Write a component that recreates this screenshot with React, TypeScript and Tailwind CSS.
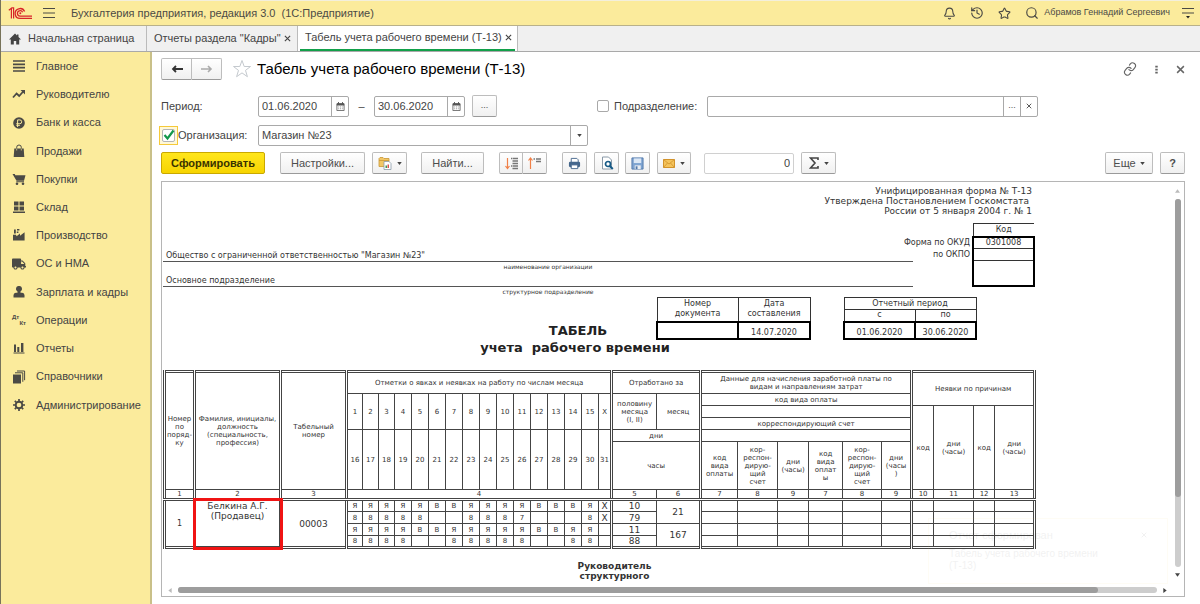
import React from 'react';
import { Bell, History, Link, Search, Star } from 'lucide-react';
import { FaTruck } from 'react-icons/fa';

const icon = 'h-[14px] w-[14px] text-[#4b4a45]';

const sections = [
  {
    title: 'Главное',
    icon: (
      <svg viewBox="0 0 14 14" className={icon}>
        <path d="M1 2h12M1 5.3h12M1 8.6h12M1 12h12" stroke="currentColor" strokeWidth="1.7" />
      </svg>
    ),
  },
  {
    title: 'Руководителю',
    icon: (
      <svg viewBox="0 0 14 14" className={icon}>
        <path d="M1 10.5l3.600-4 2.600 2.500 4-4.500" fill="none" stroke="currentColor" strokeWidth="1.8" />
        <path d="M8.500 3H13v4.500z" fill="currentColor" />
      </svg>
    ),
  },
  {
    title: 'Банк и касса',
    icon: (
      <svg viewBox="0 0 14 14" className={icon}>
        <circle cx="7" cy="7" r="5.8" fill="currentColor" />
        <path d="M5.6 11V3.9h2.2a1.8 1.8 0 0 1 0 3.8H4.3M4.3 9.3h3.6" fill="none" stroke="#fbeb9c" strokeWidth="1" />
      </svg>
    ),
  },
  {
    title: 'Продажи',
    icon: (
      <svg viewBox="0 0 14 14" className={icon}>
        <path d="M2.300 4.500h9.400l.6 8.500H1.700z" fill="currentColor" />
        <path d="M4.700 6.500V3.300a2.300 2.300 0 0 1 4.600 0v3.200" fill="none" stroke="currentColor" strokeWidth="1" />
        <path d="M4.700 4.500v2M9.300 4.500v2" stroke="#fbeb9c" strokeWidth=".7" />
      </svg>
    ),
  },
  {
    title: 'Покупки',
    icon: (
      <svg viewBox="0 0 14 14" className={icon}>
        <path d="M.5 2h2.300l.5 1.200H13.500L12 8.800H4.500zM4.300 9.300h7.700v1H4.300z" fill="currentColor" />
        <circle cx="5" cy="11.700" r="1.300" fill="currentColor" />
        <circle cx="11" cy="11.700" r="1.300" fill="currentColor" />
      </svg>
    ),
  },
  {
    title: 'Склад',
    icon: (
      <svg viewBox="0 0 14 14" className={icon}>
        <path d="M2 1.5h4.5v4H2zM7.5 1.5H12v4H7.5zM2 6.5h4.5v4H2zM7.5 6.5H12v4H7.5zM1 11.5h12V13H1z" fill="currentColor" />
      </svg>
    ),
  },
  {
    title: 'Производство',
    icon: (
      <svg viewBox="0 0 14 14" className={icon}>
        <path d="M1 12.5V6.8h3l.6 1.4L8 5.5v2.2l4.6-3.4v8.2zM2 1.5h1.8v4H2zM5 1h2.4v1.6H5zM4.8 3.4h1.6v1.5H4.8z" fill="currentColor" />
      </svg>
    ),
  },
  { title: 'ОС и НМА', icon: <FaTruck className={icon} /> },
  {
    title: 'Зарплата и кадры',
    icon: (
      <svg viewBox="0 0 14 14" className={icon}>
        <path d="M7 1a2.700 2.900 0 0 1 1.500 5.500v1.200h1.700q2.300.4 2.300 2.600v2.200h-11v-2.200q0-2.200 2.300-2.600h1.700V6.500A2.700 2.900 0 0 1 7 1z" fill="currentColor" />
      </svg>
    ),
  },
  {
    title: 'Операции',
    icon: (
      <span className="flex w-[14px] flex-col text-[6px] leading-[6px] font-bold text-[#4b4a45]">
        <span>Дт</span>
        <span className="self-end">Кт</span>
      </span>
    ),
  },
  {
    title: 'Отчеты',
    icon: (
      <svg viewBox="0 0 14 14" className={icon}>
        <path d="M2 3.5h2V11H2zM5.3 6h2v5h-2zM9 2h2.4v9H9zM1.5 11.5h11v1h-11z" fill="currentColor" />
      </svg>
    ),
  },
  {
    title: 'Справочники',
    icon: (
      <svg viewBox="0 0 14 14" className={icon}>
        <path d="M1 4.5h8v9H1z" fill="currentColor" />
        <path d="M3 2.8h7.8v9M5 1h7.6v9.2" fill="none" stroke="currentColor" strokeWidth="1" />
      </svg>
    ),
  },
  {
    title: 'Администрирование',
    icon: (
      <svg viewBox="0 0 14 14" className={icon}>
        <circle cx="7" cy="7" r="3.300" fill="none" stroke="currentColor" strokeWidth="1.900" />
        <path d="M7 1v2.200M7 10.800V13M1 7h2.200M10.800 7H13M2.800 2.800l1.500 1.500M9.700 9.700l1.500 1.500M2.800 11.200l1.500-1.500M9.700 4.300l1.500-1.500" stroke="currentColor" strokeWidth="1.700" />
      </svg>
    ),
  },
];

const firstHalf = ['1', '2', '3', '4', '5', '6', '7', '8', '9', '10', '11', '12', '13', '14', '15', 'X'];
const secondHalf = ['16', '17', '18', '19', '20', '21', '22', '23', '24', '25', '26', '27', '28', '29', '30', '31'];

const marks = [
  ['Я', 'Я', 'Я', 'Я', 'Я', 'В', 'В', 'Я', 'Я', 'Я', 'Я', 'В', 'В', 'В', 'Я', 'X'],
  ['8', '8', '8', '8', '8', '', '', '8', '8', '8', '7', '', '', '', '8', 'X'],
  ['Я', 'Я', 'Я', 'Я', 'В', 'В', 'Я', 'Я', 'Я', 'Я', 'Я', 'В', 'В', 'Я', 'Я', ''],
  ['8', '8', '8', '8', '', '', '8', '8', '8', '8', '8', '', '', '8', '8', ''],
];
const halfTotals = ['10', '79', '11', '88'];
const monthTotals = ['21', '', '167', ''];

const columnNumbers = ['5', '6', '7', '8', '9', '7', '8', '9', '10', '11', '12', '13'];

const button =
  'flex h-[22px] items-center justify-center rounded-[2px] border border-[#bdbdbd] border-b-[#9a9a9a] bg-linear-to-b from-white to-[#f0f0f0] text-[11px] text-[#4d4d4d]';
const field = 'flex h-[21px] items-stretch rounded-[2px] border border-[#a9a9a9] bg-white';
const input = 'min-w-0 flex-1 bg-transparent px-[3px] text-[11px] text-[#444] outline-none';
const part = 'flex shrink-0 items-center justify-center border-l border-[#a9a9a9] text-[#555]';
const group = 'border-x-3 border-double border-[#444]';

const Caret = () => (
  <svg viewBox="0 0 6 4" className="h-[3px] w-[5px]">
    <path d="M0 0h6L3 4z" fill="#444" />
  </svg>
);

const Cross = ({ className }: { className: string }) => (
  <svg viewBox="0 0 8 8" className={className}>
    <path d="M1 1l6 6M7 1L1 7" stroke="currentColor" strokeWidth="1.3" />
  </svg>
);

const CalendarIcon = () => (
  <svg viewBox="0 0 10 10" className="h-[9px] w-[9px]">
    <path d="M1 2h8v7.5H1z" fill="#fff" stroke="#666" />
    <path d="M1 1.5h8v2.5H1zM2.3 0h1v2h-1zM6.7 0h1v2h-1z" fill="#555" />
    <path d="M2.5 5.5h5M2.5 7.5h5" stroke="#888" strokeDasharray="1 1" />
  </svg>
);

const DateField = ({ label, value }: { label: string; value: string }) => (
  <div className={`${field} w-[91px]`}>
    <input className={input} aria-label={label} defaultValue={value} />
    <button className={`${part} w-[17px]`} aria-label="Календарь">
      <CalendarIcon />
    </button>
  </div>
);

const TopBar = () => (
  <header className="flex h-[26px] items-center border-t border-b border-t-[#f3efdc] border-b-[#b9b18a] bg-[#fbeb9c] pl-[7px] pr-[6px] text-[#4b4a45]">
    <svg viewBox="0 0 24 13" className="h-[13px] w-[24px]" fill="none" stroke="#d8232a">
      <path d="M.8 3.2L3.4 1.3v10.2M5.6 11.5V.8h-2" strokeWidth="1.2" />
      <path d="M16.6 4.6A4.9 4.9 0 1 0 12.3 11.4H24" strokeWidth="1.3" />
      <path d="M14.6 5.3A2.7 2.7 0 1 0 12.3 9.1H24" strokeWidth="1.3" />
      <circle cx="12.3" cy="6.3" r="1" fill="#d8232a" stroke="none" />
    </svg>
    <button className="ml-[11px]" aria-label="Меню">
      <svg viewBox="0 0 12 12" className="h-3 w-3">
        <path d="M0 1.5h12M0 6h12M0 10.5h12" stroke="#4b4a45" />
      </svg>
    </button>
    <span className="ml-4 text-[11px] whitespace-pre">Бухгалтерия предприятия, редакция 3.0  (1С:Предприятие)</span>
    <div className="ml-auto flex items-center gap-[14px]">
      <button aria-label="Уведомления"><Bell className="h-[13px] w-[13px]" strokeWidth={2} /></button>
      <button aria-label="История"><History className="h-[14px] w-[14px]" strokeWidth={2} /></button>
      <button aria-label="Избранное"><Star className="h-[13px] w-[13px]" strokeWidth={2} /></button>
      <button aria-label="Поиск"><Search className="h-[14px] w-[14px]" strokeWidth={2} /></button>
    </div>
    <span className="ml-[5px] text-[9px]">Абрамов Геннадий Сергеевич</span>
    <button className="ml-3" aria-label="Сервис">
      <svg viewBox="0 0 12 12" className="h-3 w-3">
        <path d="M0 1.5h12M0 6h12" stroke="#4b4a45" strokeWidth="1.2" />
        <path d="M4 9h4l-2 2.5z" fill="#222" />
      </svg>
    </button>
  </header>
);

const Tabs = () => (
  <nav className="flex h-[26px] items-stretch border-b border-[#a9a9a9] bg-[#f0f0f0] text-[11px] text-[#444]">
    <a href="#home" className="flex w-[146px] items-center gap-[7px] border-r border-[#bbb] pl-2 whitespace-nowrap">
      <svg viewBox="0 0 12 12" className="h-3 w-3">
        <path d="M6 .5L0 6.5h1.8v5h3v-3.5h2.4v3.5h3v-5H12L9.5 4V1.5H8v1z" fill="#444" />
      </svg>
      Начальная страница
    </a>
    <a href="#reports" className="flex w-[151px] items-center justify-between border-r border-[#bbb] pr-[6px] pl-[7px] whitespace-nowrap">
      Отчеты раздела "Кадры"
      <Cross className="h-[7px] w-[7px]" />
    </a>
    <a href="#t13" className="flex w-[220px] flex-col border-r border-[#bbb] bg-white px-[2px] whitespace-nowrap">
      <span className="flex flex-1 items-center justify-between border-b-2 border-[#12a04a] pr-[3px] pl-[5px]">
        Табель учета рабочего времени (Т-13)
        <Cross className="h-[7px] w-[7px]" />
      </span>
    </a>
  </nav>
);

const Sidebar = () => (
  <aside className="w-[151px] shrink-0 border-r-2 border-[#c9c089] bg-[#fbeb9c]">
    <ul className="grid h-[367px] auto-rows-fr text-[11px] text-[#444]">
      {sections.map((section) => (
        <li key={section.title} className="flex items-center">
          <a href="#section" className="flex items-center gap-[10px] pl-[11px] whitespace-nowrap">
            {section.icon}
            {section.title}
          </a>
        </li>
      ))}
    </ul>
  </aside>
);

const Heading = () => (
  <div className="flex h-[22px] items-center">
    <div className="flex">
      <button className={`${button} w-[31px] rounded-r-none`} aria-label="Назад">
        <svg viewBox="0 0 12 8" className="h-2 w-3">
          <path d="M12 4H2M5 1L2 4l3 3" fill="none" stroke="#333" strokeWidth="1.8" />
        </svg>
      </button>
      <button className={`${button} w-[30px] rounded-l-none border-l-0`} aria-label="Вперед">
        <svg viewBox="0 0 12 8" className="h-2 w-3">
          <path d="M0 4h10M7 1l3 3-3 3" fill="none" stroke="#aaa" strokeWidth="1.6" />
        </svg>
      </button>
    </div>
    <button className="ml-[10px]" aria-label="В избранное">
      <svg viewBox="0 0 20 20" className="h-5 w-5">
        <path d="M10 1.5l2.2 6h6.3l-5 3.9 1.9 6.3-5.4-3.8-5.4 3.8 1.9-6.3-5-3.9h6.3z" fill="#fff" stroke="#c4c9ce" />
      </svg>
    </button>
    <h1 className="ml-[5px] text-[15px] text-black">Табель учета рабочего времени (Т-13)</h1>
    <div className="ml-auto flex items-center gap-[15px] text-[#666]">
      <button aria-label="Ссылка"><Link className="h-[14px] w-[14px] -rotate-6" strokeWidth={2} /></button>
      <button className="px-[3px]" aria-label="Еще">
        <svg viewBox="0 0 3 11" className="h-[9px] w-[3px]">
          <path d="M0 1h3v2H0zM0 4.7h3v2H0zM0 8.4h3v2H0z" fill="currentColor" />
        </svg>
      </button>
      <button aria-label="Закрыть"><Cross className="h-[9px] w-[9px]" /></button>
    </div>
  </div>
);

const Filters = () => (
  <div className="mt-[15px] flex flex-col gap-2 text-[11px] text-[#444]">
    <div className="flex items-center">
      <span className="w-[97px]">Период:</span>
      <DateField label="Начало периода" value="01.06.2020" />
      <span className="w-[25px] text-center">–</span>
      <DateField label="Конец периода" value="30.06.2020" />
      <button className={`${button} ml-[7px] w-[25px]`} aria-label="Выбрать период">
        <span className="text-[9px]">...</span>
      </button>
      <input id="department" type="checkbox" className="ml-[100px] h-3 w-3 appearance-none rounded-[2px] border border-[#a9a9a9] bg-white" />
      <label htmlFor="department" className="ml-[5px] w-[93px]">Подразделение:</label>
      <div className={`${field} w-[331px]`}>
        <input className={input} aria-label="Подразделение" />
        <button className={`${part} w-[17px] text-[9px]`} aria-label="Выбрать">...</button>
        <button className={`${part} w-[17px]`} aria-label="Очистить">
          <Cross className="h-[6px] w-[6px]" />
        </button>
      </div>
    </div>
    <div className="flex items-center">
      <span className="relative -ml-[2px] flex border border-[#f5c93a] bg-[#fff8d8] p-[2px]">
        <input id="organization" type="checkbox" defaultChecked className="h-[13px] w-[13px] appearance-none rounded-[2px] border border-[#b5b5b5] bg-white" />
        <svg viewBox="0 0 12 12" className="pointer-events-none absolute top-[2px] left-[3px] h-3 w-3">
          <path d="M1.5 6l3 3.5L10.500 1.500" fill="none" stroke="#12984a" strokeWidth="2.2" />
        </svg>
      </span>
      <label htmlFor="organization" className="w-[80px]">Организация:</label>
      <div className={`${field} w-[330px]`}>
        <input className={input} aria-label="Организация" defaultValue="Магазин №23" />
        <button className={`${part} w-[17px]`} aria-label="Открыть список"><Caret /></button>
      </div>
    </div>
  </div>
);

const Toolbar = () => (
  <div className="mt-[6px] flex items-center">
    <button className="h-[22px] w-[104px] rounded-[2px] border border-[#c9a800] bg-linear-to-b from-[#ffe61a] to-[#f7d400] text-[11px] font-bold text-[#3a3300]">
      Сформировать
    </button>
    <button className={`${button} ml-[15px] w-[85px]`}>Настройки...</button>
    <button className={`${button} ml-[7px] w-[35px] gap-[5px]`} aria-label="Варианты отчета">
      <svg viewBox="0 0 14 14" className="h-[14px] w-[14px]">
        <path d="M1 2.500l1-1h3l1 1h5v8H1z" fill="#f2c766" stroke="#c99735" strokeWidth=".8" />
        <path d="M1 4.500h10" stroke="#c99735" strokeWidth=".8" />
        <path d="M6 5.500h5l2 2v6H6z" fill="#fff" stroke="#8a9aa8" strokeWidth=".8" />
        <path d="M7.500 12V9.500h1.500V12z" fill="#3c9a57" />
        <path d="M9.500 12V8.500H11V12z" fill="#d9534f" />
      </svg>
      <Caret />
    </button>
    <button className={`${button} ml-[14px] w-[63px]`}>Найти...</button>
    <div className="ml-[15px] flex">
      <button className={`${button} w-6 rounded-r-none`} aria-label="Развернуть группы">
        <svg viewBox="0 0 13 13" className="h-[13px] w-[13px]">
          <path d="M2.500 1v10M.5 9l2 2.500 2-2.500" fill="none" stroke="#f08048" strokeWidth="1.2" />
          <path d="M6 1.500h1.500M8 1.500h5M7.500 4h5.500M7.500 6.500h5.500M6 9h1.500M8 9h5M7.500 11.500h5.500" stroke="#777" strokeWidth="1.4" />
        </svg>
      </button>
      <button className={`${button} w-6 rounded-l-none border-l-0`} aria-label="Свернуть группы">
        <svg viewBox="0 0 13 13" className="h-[13px] w-[13px]">
          <path d="M2.500 12V1.500M.5 3.500l2-2.500 2 2.500" fill="none" stroke="#f08048" strokeWidth="1.2" />
          <path d="M5.500 2h1.500M8 2h5M8 4.500h5" stroke="#777" strokeWidth="1.6" />
        </svg>
      </button>
    </div>
    <button className={`${button} ml-[15px] w-[25px]`} aria-label="Печать">
      <svg viewBox="0 0 14 14" className="h-[13px] w-[13px]">
        <path d="M3.500 1.500h6l1.500 1.500v3h-7.500z" fill="#fff" stroke="#45678c" />
        <rect x="1" y="5" width="12" height="6" rx="1.500" fill="#45678c" />
        <path d="M3.500 8.500h7v4h-7z" fill="#fff" stroke="#45678c" />
      </svg>
    </button>
    <button className={`${button} ml-[7px] w-[25px]`} aria-label="Предварительный просмотр">
      <svg viewBox="0 0 14 14" className="h-[14px] w-[14px]">
        <path d="M2.500 1h6l3 3v9h-9z" fill="#fff" stroke="#8a9aa8" />
        <circle cx="8" cy="8" r="2.500" fill="#fff" stroke="#155a86" strokeWidth="1.700" />
        <path d="M9.800 10l3 3" stroke="#155a86" strokeWidth="2" />
      </svg>
    </button>
    <button className={`${button} ml-[6px] w-[25px]`} aria-label="Сохранить">
      <svg viewBox="0 0 14 14" className="h-[13px] w-[13px]">
        <path d="M1 1h12v12H1z" fill="#7fa4d1" stroke="#5279ab" />
        <path d="M3 1.500h8v5H3z" fill="#dbe7f5" />
        <path d="M4 9h6.500v4H4z" fill="#e9edf2" />
        <path d="M5 10h2v3H5z" fill="#5279ab" />
      </svg>
    </button>
    <button className={`${button} ml-[7px] w-[34px] gap-[5px]`} aria-label="Отправить">
      <svg viewBox="0 0 12 9" className="h-[9px] w-3">
        <path d="M.5.5h11v8H.5z" fill="#f5c45c" stroke="#d2932c" />
        <path d="M.5.5L6 5l5.500-4.500M.5 8.500l4-4.500M11.500 8.500l-4-4.500" fill="none" stroke="#d2932c" strokeWidth=".8" />
      </svg>
      <Caret />
    </button>
    <input className="ml-[13px] h-[21px] w-[90px] rounded-[2px] border border-[#d0d0d0] px-[3px] text-right text-[11px] text-[#444]" aria-label="Сумма" defaultValue="0" />
    <button className={`${button} ml-[7px] w-[35px] gap-[5px]`} aria-label="Вычислить">
      <svg viewBox="0 0 10 12" className="h-3 w-[10px]">
        <path d="M9 3V1H1.500L6 6l-4.500 5H9V9" fill="none" stroke="#444" strokeWidth="1.600" />
      </svg>
      <Caret />
    </button>
    <button className={`${button} ml-auto w-[48px] gap-[4px]`}>
      Еще
      <Caret />
    </button>
    <button className={`${button} ml-[7px] w-[25px] font-bold`} aria-label="Справка">?</button>
  </div>
);

const FormHeader = () => (
  <>
    <div className="flex flex-col items-end pt-[4px] pr-[3px] text-right text-[9px] leading-[10px]">
      <p>Унифицированная форма № Т-13</p>
      <p className="pr-[3px]">Утверждена Постановлением Госкомстата</p>
      <p>России от 5 января 2004 г. № 1</p>
    </div>
    <div className="mt-[7px] flex">
      <div className="w-[750px] shrink-0">
        <p className="mt-[27px] h-3 border-b border-[#555] pl-[3px] leading-[11px]">Общество с ограниченной ответственностью "Магазин №23"</p>
        <p className="pl-5 text-center text-[6px] leading-[9px]">наименование организации</p>
        <p className="mt-[4px] h-3 border-b border-[#555] pl-[3px] leading-[11px]">Основное подразделение</p>
        <p className="pl-5 text-center text-[6px] leading-[9px]">структурное подразделение</p>
      </div>
      <div className="flex-1 pt-[14px] pr-[2px] text-right leading-[12px] whitespace-nowrap">
        <p className="-ml-6">Форма по ОКУД</p>
        <p>по ОКПО</p>
      </div>
      <table className="h-[64px] w-[63px] shrink-0 border-collapse text-center leading-[10px]">
        <thead>
          <tr className="h-[13px]">
            <th className="border-t border-l border-[#333] p-0 font-normal">Код</th>
          </tr>
        </thead>
        <tbody className="border-2 border-black">
          <tr className="h-3"><td className="border-b border-[#333] p-0">0301008</td></tr>
          <tr className="h-3"><td className="border-b border-[#333] p-0" /></tr>
          <tr><td className="p-0" /></tr>
        </tbody>
      </table>
    </div>
    <div className="mt-px flex items-start">
      <div className="flex w-[493px] justify-end pt-[26px]">
        <h2 className="w-[156px] text-center text-[13px] leading-4 font-bold text-[#222]">ТАБЕЛЬ</h2>
      </div>
      <table className="h-[43px] w-[153px] table-fixed border-collapse text-center leading-[10px]">
        <colgroup>
          <col className="w-[81px]" />
          <col className="w-[72px]" />
        </colgroup>
        <thead>
          <tr className="h-6">
            <th className="border border-[#333] p-0 font-normal">Номер<br />документа</th>
            <th className="border border-[#333] p-0 font-normal">Дата<br />составления</th>
          </tr>
        </thead>
        <tbody>
          <tr>
            <td className="border-2 border-black p-0" />
            <td className="border-2 border-black p-0 align-bottom">14.07.2020</td>
          </tr>
        </tbody>
      </table>
      <table className="ml-8 h-[43px] w-[132px] table-fixed border-collapse text-center leading-[10px]">
        <colgroup>
          <col className="w-[71px]" />
          <col className="w-[61px]" />
        </colgroup>
        <thead>
          <tr className="h-3">
            <th colSpan={2} className="border border-[#333] p-0 font-normal">Отчетный период</th>
          </tr>
          <tr className="h-3">
            <th className="border border-[#333] p-0 font-normal">с</th>
            <th className="border border-[#333] p-0 font-normal">по</th>
          </tr>
        </thead>
        <tbody>
          <tr>
            <td className="border-2 border-black p-0 align-bottom">01.06.2020</td>
            <td className="border-2 border-black p-0 align-bottom">30.06.2020</td>
          </tr>
        </tbody>
      </table>
    </div>
    <h2 className="w-[824px] text-center text-[13px] leading-4 font-bold whitespace-pre text-[#222]">учета  рабочего времени</h2>
  </>
);

const Timesheet = () => (
  <table className="mt-[14px] w-[871px] table-fixed border-collapse border-3 border-double border-[#444] text-center text-[7px] leading-[8px] [&_td]:border [&_td]:border-[#444] [&_td]:p-0 [&_th]:border [&_th]:border-[#444] [&_th]:p-0 [&_th]:font-normal">
    <colgroup className={group}><col className="w-[30px]" /></colgroup>
    <colgroup className={group}><col className="w-[86px]" /></colgroup>
    <colgroup className={group}><col className="w-[66px]" /></colgroup>
    <colgroup className={group}>
      <col span={3} className="w-[16px]" />
      <col span={12} className="w-[17px]" />
      <col className="w-[13px]" />
    </colgroup>
    <colgroup className={group}>
      <col className="w-[45px]" />
      <col className="w-[44px]" />
    </colgroup>
    <colgroup className={group}>
      <col className="w-[37px]" />
      <col className="w-[40px]" />
      <col className="w-[31px]" />
      <col className="w-[34px]" />
      <col className="w-[39px]" />
      <col className="w-[30px]" />
    </colgroup>
    <colgroup className={group}>
      <col className="w-[22px]" />
      <col className="w-[40px]" />
      <col className="w-[21px]" />
      <col className="w-[40px]" />
    </colgroup>
    <thead className="border-b-3 border-double border-[#444]">
      <tr className="h-[22px]">
        <th rowSpan={6}>Номер<br />по<br />поряд-<br />ку</th>
        <th rowSpan={6}>Фамилия, инициалы,<br />должность<br />(специальность,<br />профессия)</th>
        <th rowSpan={6}>Табельный<br />номер</th>
        <th colSpan={16}>Отметки о явках и неявках на работу по числам месяца</th>
        <th colSpan={2}>Отработано за</th>
        <th colSpan={6}>Данные для начисления заработной платы по<br />видам и направлениям затрат</th>
        <th colSpan={4} rowSpan={2}>Неявки по причинам</th>
      </tr>
      <tr className="h-3">
        {firstHalf.map((day) => <th key={day} rowSpan={3}>{day}</th>)}
        <th rowSpan={3}>половину<br />месяца<br />(I, II)</th>
        <th rowSpan={3}>месяц</th>
        <th colSpan={6}>код вида оплаты</th>
      </tr>
      <tr className="h-3">
        <th colSpan={6} />
        <th rowSpan={4}>код</th>
        <th rowSpan={4}>дни<br />(часы)</th>
        <th rowSpan={4}>код</th>
        <th rowSpan={4}>дни<br />(часы)</th>
      </tr>
      <tr className="h-3">
        <th colSpan={6}>корреспондирующий счет</th>
      </tr>
      <tr className="h-3">
        {secondHalf.map((day) => <th key={day} rowSpan={2}>{day}</th>)}
        <th colSpan={2}>дни</th>
        <th colSpan={6} />
      </tr>
      <tr className="h-12">
        <th colSpan={2}>часы</th>
        <th>код<br />вида<br />оплаты</th>
        <th>кор-<br />респон-<br />дирую-<br />щий<br />счет</th>
        <th>дни<br />(часы)</th>
        <th>код<br />вида<br />оплат<br />ы</th>
        <th>кор-<br />респон-<br />дирую-<br />щий<br />счет</th>
        <th>дни<br />(часы<br />)</th>
      </tr>
      <tr className="h-[10px]">
        <th>1</th>
        <th>2</th>
        <th>3</th>
        <th colSpan={16}>4</th>
        {columnNumbers.map((number, index) => <th key={index}>{number}</th>)}
      </tr>
    </thead>
    <tbody>
      {marks.map((row, rowIndex) => (
        <tr key={rowIndex} className="h-3">
          {rowIndex === 0 && (
            <>
              <td rowSpan={4} className="text-[8px]">1</td>
              <td rowSpan={4} className="align-top text-[9px] leading-[10px] outline-3 -outline-offset-1 outline-[#f01414]">Белкина А.Г.<br />(Продавец)</td>
              <td rowSpan={4} className="text-[9px]">00003</td>
            </>
          )}
          {row.map((mark, index) => (
            <td key={index} className={mark === 'X' ? 'text-[9px]' : undefined}>{mark}</td>
          ))}
          <td className="text-[9px]">{halfTotals[rowIndex]}</td>
          {rowIndex % 2 === 0 && <td rowSpan={2} className="text-[9px]">{monthTotals[rowIndex]}</td>}
          {Array.from({ length: 10 }, (_, index) => <td key={index} />)}
        </tr>
      ))}
    </tbody>
  </table>
);

const Report = () => (
  <div className="relative mt-[7px] flex min-h-0 flex-1 flex-col border border-[#b5b5b5]">
    <div className="flex min-h-0 flex-1">
      <div className="min-w-0 flex-1 overflow-hidden pl-px font-['DejaVu_Sans',sans-serif] text-[8px] text-[#333]">
        <div className="w-[872px]">
          <FormHeader />
          <Timesheet />
          <p className="mt-[12px] pl-[31px] text-center text-[9px] leading-[10px] font-bold">Руководитель<br />структурного</p>
        </div>
      </div>
      <div className="flex w-[13px] flex-col items-center gap-[6px] pt-[7px] pb-[7px]">
        <svg viewBox="0 0 6 4" className="h-1 w-[5px]"><path d="M0 4h6L3 0z" fill="#bbb" /></svg>
        <div className="w-[6px] flex-1 rounded-full bg-[#cdcdcd]">
          <div className="h-[81%] rounded-full bg-[#9d9d9d]" />
        </div>
        <svg viewBox="0 0 6 4" className="h-1 w-[5px]"><path d="M0 0h6L3 4z" fill="#444" /></svg>
      </div>
    </div>
    <div className="flex h-3 shrink-0 items-center gap-[6px] pr-[17px] pl-[6px]">
      <svg viewBox="0 0 4 6" className="h-[5px] w-1"><path d="M4 0v6L0 3z" fill="#bbb" /></svg>
      <div className="h-[6px] flex-1 rounded-full bg-[#cdcdcd]">
        <div className="h-full w-[94%] rounded-full bg-[#9d9d9d]" />
      </div>
      <svg viewBox="0 0 4 6" className="h-[5px] w-1"><path d="M0 0v6l4-3z" fill="#444" /></svg>
    </div>
    {/* notification, almost faded out */}
    <div className="pointer-events-none absolute right-4 bottom-3 h-[66px] w-[240px] border border-[#f3cf55] px-5 py-2 text-[11px] text-black opacity-5">
      <div className="flex items-center justify-between">
        Отчет сформирован
        <Cross className="h-[6px] w-[6px]" />
      </div>
      <p className="mt-1 text-[10px] leading-3">Табель учета рабочего времени<br />(Т-13)</p>
    </div>
  </div>
);

const App = () => {
  return (
    <div className="flex h-screen flex-col overflow-hidden border-l border-[#77735a] bg-white font-['Liberation_Sans',Arial,sans-serif]">
      <TopBar />
      <Tabs />
      <div className="flex min-h-0 flex-1">
        <Sidebar />
        <main className="flex min-w-0 flex-1 flex-col pt-[6px] pr-[15px] pb-[7px] pl-[9px]">
          <Heading />
          <Filters />
          <Toolbar />
          <Report />
        </main>
      </div>
    </div>
  );
};

export default App;
